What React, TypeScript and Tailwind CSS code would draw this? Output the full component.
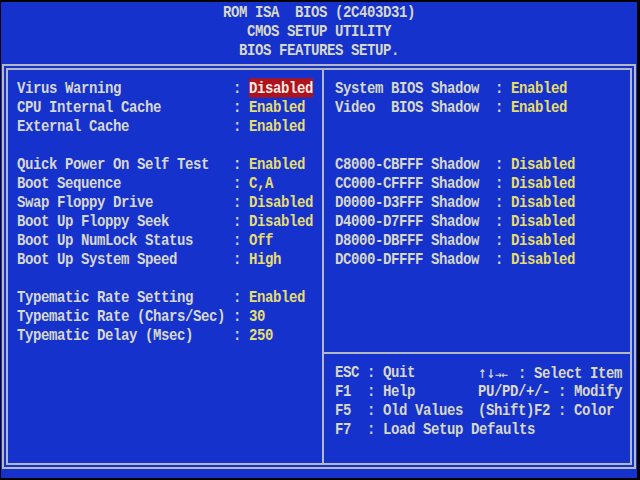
const leftRows: ([string, string, boolean?] | null)[] = [
  ["Virus Warning", "Disabled", true],
  ["CPU Internal Cache", "Enabled"],
  ["External Cache", "Enabled"],
  null,
  ["Quick Power On Self Test", "Enabled"],
  ["Boot Sequence", "C,A"],
  ["Swap Floppy Drive", "Disabled"],
  ["Boot Up Floppy Seek", "Disabled"],
  ["Boot Up NumLock Status", "Off"],
  ["Boot Up System Speed", "High"],
  null,
  ["Typematic Rate Setting", "Enabled"],
  ["Typematic Rate (Chars/Sec)", "30"],
  ["Typematic Delay (Msec)", "250"],
];

const rightRows: ([string, string] | null)[] = [
  ["System BIOS Shadow", "Enabled"],
  ["Video  BIOS Shadow", "Enabled"],
  null,
  null,
  ["C8000-CBFFF Shadow", "Disabled"],
  ["CC000-CFFFF Shadow", "Disabled"],
  ["D0000-D3FFF Shadow", "Disabled"],
  ["D4000-D7FFF Shadow", "Disabled"],
  ["D8000-DBFFF Shadow", "Disabled"],
  ["DC000-DFFFF Shadow", "Disabled"],
];

const keysLeft = ["ESC : Quit", "F1  : Help", "F5  : Old Values", "F7  : Load Setup Defaults"];
const keysRight = ["PU/PD/+/- : Modify", "(Shift)F2 : Color", ""];

// one text-mode line; stretched a little to get the tall VGA glyph look
function Line({ children }: { children?: React.ReactNode }) {
  return <div className="h-[19px] leading-[19px] whitespace-pre scale-y-[1.2]">{children}</div>;
}

function Setting({ label, value, width, selected }: { label: string; value: string; width: number; selected?: boolean }) {
  return (
    <Line>
      {label.padEnd(width)}: <span className={selected ? "bg-[#b0121c] text-[#f2ece4]" : "text-[#e6de6c]"}>{value}</span>
    </Line>
  );
}

export default function App() {
  return (
    <div className="w-[640px] h-[480px] bg-black pt-[2px] pl-[1px] pr-[3px] pb-[2px] font-['Liberation_Mono','DejaVu_Sans_Mono',monospace] font-bold text-[14px] tracking-[-0.4px]">
      <div className="h-full bg-[#1632cd] text-[#d6d8cc] flex flex-col">
        {/* ── Title ─────────────────────────── */}
        <div className="pt-[1px] flex flex-col items-center">
          <Line>ROM ISA  BIOS (2C403D31)</Line>
          <Line>CMOS SETUP UTILITY</Line>
          <Line>BIOS FEATURES SETUP.</Line>
        </div>

        {/* ── Frame ─────────────────────────── */}
        <div className="mt-[4px] mx-[1px] h-[405px] border-[6px] border-double border-[#b4b8c0] flex">
          <div className="w-[314px] pt-[9px] pl-[9px]">
            {leftRows.map((r, i) =>
              r ? <Setting key={i} label={r[0]} value={r[1]} selected={r[2]} width={27} /> : <Line key={i} />
            )}
          </div>

          <div className="w-[2px] bg-[#b4b8c0]" />

          <div className="flex-1 flex flex-col">
            <div className="h-[282px] pt-[9px] pl-[11px]">
              {rightRows.map((r, i) =>
                r ? <Setting key={i} label={r[0]} value={r[1]} width={20} /> : <Line key={i} />
              )}
            </div>
            <div className="h-[2px] bg-[#b4b8c0]" />
            <div className="pt-[9px] pl-[11px] flex">
              <div className="w-[143px]">
                {keysLeft.map((k) => (
                  <Line key={k}>{k}</Line>
                ))}
              </div>
              <div>
                <Line>
                  {/* arrow keys: tall up/down, small left/right as in the CP437 set */}
                  <span className="inline-block w-[32px] tracking-normal font-['DejaVu_Sans',sans-serif]">
                    <span className="text-[10px]">↑↓</span>
                    <span className="text-[8px]">→←</span>
                  </span>
                  {" : Select Item"}
                </Line>
                {keysRight.map((k, i) => (
                  <Line key={i}>{k}</Line>
                ))}
              </div>
            </div>
          </div>
        </div>
      </div>
    </div>
  );
}
